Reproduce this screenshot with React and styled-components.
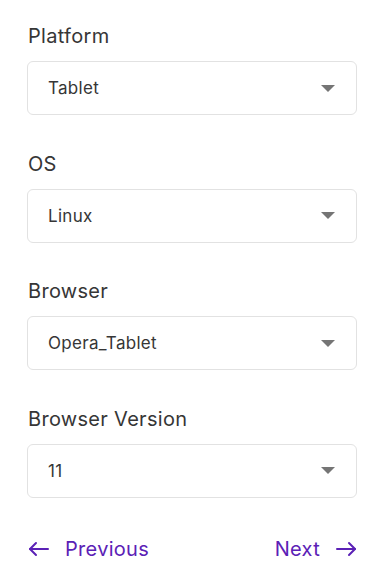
import React from 'react'
import styled, { createGlobalStyle } from 'styled-components'

const GlobalStyle = createGlobalStyle`
  body {
    margin: 0;
    background: #ffffff;
    font-family: Inter, "Noto Sans", sans-serif;
    letter-spacing: 0.3px;
  }
`

const Page = styled.div`
  width: 330px;
  padding: 24px 31px 0 27px;
  display: flex;
  flex-direction: column;
`

const Field = styled.div`
  display: flex;
  flex-direction: column;
  margin-bottom: 36.5px;
`

const Label = styled.label`
  font-size: 20px;
  line-height: 24px;
  color: #363636;
  padding-left: 1px;
  margin-bottom: 13px;
`

const Select = styled.div`
  height: 52px;
  border: 1px solid #e2e2e2;
  border-radius: 6px;
  display: flex;
  align-items: center;
  justify-content: space-between;
  padding: 0 21px 0 20px;
  font-size: 17px;
  color: #363636;
`

const Caret = styled.span`
  width: 0;
  height: 0;
  border-left: 7px solid transparent;
  border-right: 7px solid transparent;
  border-top: 7px solid #757575;
`

const Nav = styled.div`
  display: flex;
  justify-content: space-between;
  align-items: center;
  margin-top: 3px;
`

const NavButton = styled.button`
  display: flex;
  align-items: center;
  gap: 16px;
  background: none;
  border: none;
  padding: 0 0 0 1px;
  font-family: inherit;
  font-size: 20px;
  line-height: 24px;
  letter-spacing: 0.3px;
  color: #5b21b6;
  cursor: pointer;
`

const Arrow = ({ dir }) => (
  <svg width="21" height="16" viewBox="0 0 21 16" fill="none" stroke="currentColor" strokeWidth="2" strokeLinecap="round" strokeLinejoin="round">
    {dir === 'left' ? (
      <>
        <path d="M20 8H2" />
        <path d="M8 2L2 8l6 6" />
      </>
    ) : (
      <>
        <path d="M1 8h18" />
        <path d="M13 2l6 6-6 6" />
      </>
    )}
  </svg>
)

const fields = [
  ['Platform', 'Tablet'],
  ['OS', 'Linux'],
  ['Browser', 'Opera_Tablet'],
  ['Browser Version', '11'],
]

export default function App() {
  return (
    <>
      <GlobalStyle />
      <Page>
        {fields.map(([label, value]) => (
          <Field key={label}>
            <Label>{label}</Label>
            <Select>
              {value}
              <Caret />
            </Select>
          </Field>
        ))}
        <Nav>
          <NavButton>
            <Arrow dir="left" />
            Previous
          </NavButton>
          <NavButton>
            Next
            <Arrow dir="right" />
          </NavButton>
        </Nav>
      </Page>
    </>
  )
}
